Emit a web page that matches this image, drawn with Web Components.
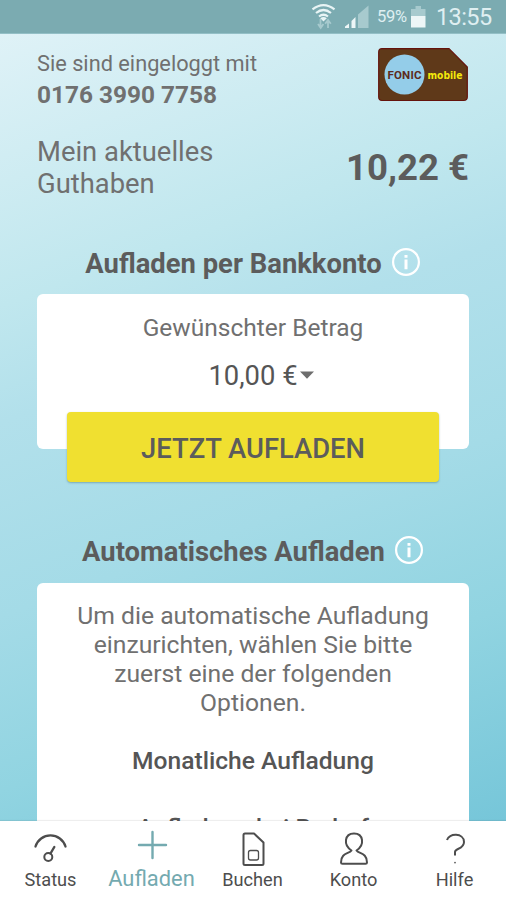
<!DOCTYPE html>
<html lang="de">
<head>
<meta charset="utf-8">
<title>FONIC mobile – Aufladen</title>
<style>
html,body{margin:0;height:100%;overflow:hidden}
body{font-family:Roboto,"Noto Sans",sans-serif;color:#707070}
</style>
</head>
<body>
<fonic-app></fonic-app>
<script>
const define = (name, html) => {
  const t = document.createElement('template');
  t.innerHTML = html;
  customElements.define(name, class extends HTMLElement {
    constructor() {
      super();
      this.attachShadow({mode: 'open'}).append(t.content.cloneNode(true));
    }
  });
};

define('status-bar', `
<style>
:host{display:block;height:33px;flex:none;background:#7babb1;border-bottom:1px solid #93bfc6;color:#dfeff1}
.row{display:flex;height:33px;justify-content:flex-end;align-items:center;padding-right:15px;line-height:1}
svg{display:block;margin-right:7px}
.pct{font-size:16.500px;letter-spacing:-.3px;margin-right:4px;width:30px;padding-top:2px}
.time{font-size:23.500px;letter-spacing:-.6px;width:55px;white-space:nowrap;margin-left:10px;padding-top:3px}
</style>
<div class="row">
<svg width="63" height="33" viewBox="0 0 63 33" style="margin-right:8px">
 <g fill="none" stroke="#e8f4f5" stroke-width="2.2" transform="translate(1.500 0)">
  <path d="M5 9.3Q16 .8 27 9.3"/><path d="M8.500 13Q16 7 23.500 13"/><path d="M11.500 16.500Q16 13 20.500 16.500"/></g>
 <path d="M14.200 18.300Q17.500 15.500 20.800 18.300L17.500 21.500Z" fill="#e8f4f5"/>
 <path d="M14.500 19v8M12 24l2.700 4 2.700-4M22 28v-7M19.200 23.700l2.800-3.700 2.800 3.700" fill="none" stroke="#a7cace" stroke-width="1.800"/>
 <path d="M52 28V14.500l10.500-9v22.500z" fill="#a7cace"/>
 <path d="M39 28v-1.500l4-3V28zM45.500 28v-7l4-4v11z" fill="#edf6f7"/>
</svg>
<span class="pct">59%</span>
<svg width="15" height="22" viewBox="0 0 15 22" style="margin:0"><path d="M0 3h4.500V0h5.500v3H14.500v7H0z" fill="#a7cace"/><path d="M0 10h14.500v11.500H0z" fill="#edf6f7"/></svg>
<span class="time">13:55</span>
</div>`);

define('sim-logo', `
<style>:host{display:block;width:90px;height:54px;margin-right:1px}svg{display:block}</style>
<svg width="90" height="54" viewBox="0 0 90 54">
<path d="M4 .7H71L89.300 19V49Q89.300 52.500 85.500 52.500H4Q.7 52.500 .7 49V4Q.7 .7 4 .7Z" fill="#5f3919" stroke="#64130c" stroke-width="1.200"/>
<circle cx="26.500" cy="26.500" r="20" fill="#94cde9"/>
<text x="9.500" y="30.500" textLength="34" lengthAdjust="spacing" font-family="Roboto,sans-serif" font-size="11.500" font-weight="700" fill="#5d2b20">FONIC</text>
<text x="49.500" y="30.500" textLength="35" lengthAdjust="spacingAndGlyphs" font-family="DejaVu Sans,sans-serif" font-size="11" font-weight="bold" fill="#f5ea0c">mobile</text>
</svg>`);

define('account-header', `
<style>
:host{display:block;padding:0 37px}
.top{display:flex;justify-content:space-between;height:102px;padding-top:14px;box-sizing:border-box}
.l{font-size:21.750px;line-height:31px}
.l b{display:block;font-size:24.400px;line-height:32px}
.bal{display:flex;justify-content:space-between;align-items:center;height:64px}
.bal span{font-size:27.400px;line-height:32px}
.bal b{font-size:36.600px;color:#5c5c5c;line-height:40px}
</style>
<div class="top"><div class="l">Sie sind eingeloggt mit<b>0176 3990 7758</b></div><sim-logo></sim-logo></div>
<div class="bal"><span>Mein aktuelles<br>Guthaben</span><b>10,22 €</b></div>`);

define('section-title', `
<style>
:host{display:flex;justify-content:center;align-items:center;gap:9px;height:32px;font-size:27.400px;font-weight:700;color:#5c5c5c;white-space:nowrap;line-height:32px}
span{padding-top:2px}
svg{display:block;margin-top:-3px;flex:none}
</style>
<span><slot></slot></span>
<svg width="30" height="30" viewBox="0 0 30 30"><circle cx="15" cy="15" r="12.900" fill="none" stroke="#fff" stroke-width="2.200"/><path d="M13.500 8h3v2.800h-3zM13.500 12.500h3v9.800h-3z" fill="#fff"/></svg>`);

define('white-card', `
<style>:host{display:block;background:#fff;border-radius:6px;margin:0 37px;text-align:center;box-sizing:border-box}</style><slot></slot>`);

define('amount-picker', `
<style>
:host{display:block;padding-top:18px}
.label{font-size:24.500px;line-height:31px}
.value{display:flex;justify-content:center;align-items:center;gap:2px;font-size:27.400px;line-height:32px;color:#555;margin-top:17px;padding-left:16px}
svg{display:block;margin-top:-2px}
</style>
<div class="label">Gewünschter Betrag</div>
<div class="value"><span>10,00 €</span><svg width="14" height="8"><path d="M0 .5h14L7 7.700z" fill="#6d6d6d"/></svg></div>`);

define('charge-button', `
<style>
:host{display:flex;align-items:center;justify-content:center;height:70px;margin:-37px 67px 0;position:relative;background:#f0e030;border-radius:4px;color:#5c5c5c;font-size:27.400px;font-weight:500;box-shadow:0 1px 2px #4f7c8688;padding-top:3px;box-sizing:border-box}
</style><slot></slot>`);

define('nav-item', `
<style>
:host{display:flex;flex-direction:column;align-items:center;justify-content:flex-end;flex:1;color:#4d4d4d;font-size:18.200px;line-height:22px;box-sizing:border-box;padding-bottom:9px;gap:2px}
:host([active]){color:#74aab0;font-size:21.900px;padding-bottom:10px}
::slotted(svg){display:block;fill:none;stroke:currentColor;stroke-width:2;stroke-linecap:round;stroke-linejoin:round}
</style><slot name="icon"></slot><span><slot></slot></span>`);

define('bottom-nav', `
<style>:host{display:flex;height:79px;flex:none;background:#fff;box-shadow:0 -1px 1px #0001;position:relative;box-sizing:border-box;padding-right:1px}</style>
<nav-item><svg slot="icon" width="40" height="36" viewBox="0 0 40 36"><path d="M4.500 15.500A15.700 15.700 0 0 1 34.500 15.500" stroke-width="2.300"/><circle cx="17.300" cy="26" r="4"/><path d="M19.500 22.500L23.300 16" stroke-width="2.400"/></svg>Status</nav-item>
<nav-item active><svg slot="icon" width="40" height="36" viewBox="0 0 40 36"><path d="M20.500 2v26M7 15h27" stroke-width="2.400"/></svg>Aufladen</nav-item>
<nav-item><svg slot="icon" width="40" height="36" viewBox="0 0 40 36"><path d="M12 2.500h9l9.500 9V32.500q0 1.500-1.500 1.500H12q-1.500 0-1.500-1.500V4q0-1.500 1.500-1.500z"/><rect x="15.500" y="19.500" width="10" height="9.500" rx="2" stroke-width="1.300"/></svg>Buchen</nav-item>
<nav-item><svg slot="icon" width="40" height="36" viewBox="0 0 40 36"><path d="M17.500 19.500C9 14 10.500 2.500 20 2.500S31 14 22.500 19.500C25 23 33 21.500 33 31.500Q33 32.700 31.500 32.700H8.500Q7 32.700 7 31.500C7 21.500 15 23 17.500 19.500Z"/></svg>Konto</nav-item>
<nav-item><svg slot="icon" width="40" height="36" viewBox="0 0 40 36"><path d="M12 9C13.500 2 29 1.500 29 11C29 18.500 20 17 20 21v3.500" stroke-linecap="butt"/><path d="M20 31.500v.3" stroke-width="1.600"/></svg>Hilfe</nav-item>`);

define('fonic-app', `
<style>
:host{display:flex;flex-direction:column;width:506px;height:900px;overflow:hidden}
main{flex:1;min-height:0;overflow:hidden;background:linear-gradient(160deg,#dff2f7 0%,#c0e7ee 28%,#b2e0eb 40%,#a4dbe7 60%,#91d4e1 78%,#76c6d9 100%)}
.s1{margin-top:47px}.s2{margin-top:53px}
.c1{height:155px;margin-top:15px}
.c2{height:300px;margin-top:16px;padding-top:18px}
p{margin:0;font-size:24.700px;line-height:29px}
.opt{font-size:24.600px;line-height:30px;font-weight:500;color:#555}
.m{margin-top:29px}.n{margin-top:37px}
</style>
<status-bar></status-bar>
<main>
<account-header></account-header>
<section-title class="s1">Aufladen per Bankkonto</section-title>
<white-card class="c1"><amount-picker></amount-picker></white-card>
<charge-button>JETZT AUFLADEN</charge-button>
<section-title class="s2">Automatisches Aufladen</section-title>
<white-card class="c2"><p>Um die automatische Aufladung<br>einzurichten, wählen Sie bitte<br>zuerst eine der folgenden<br>Optionen.</p>
<div class="opt m">Monatliche Aufladung</div><div class="opt n">Aufladung bei Bedarf</div></white-card>
</main>
<bottom-nav></bottom-nav>`);
</script>
</body>
</html>
